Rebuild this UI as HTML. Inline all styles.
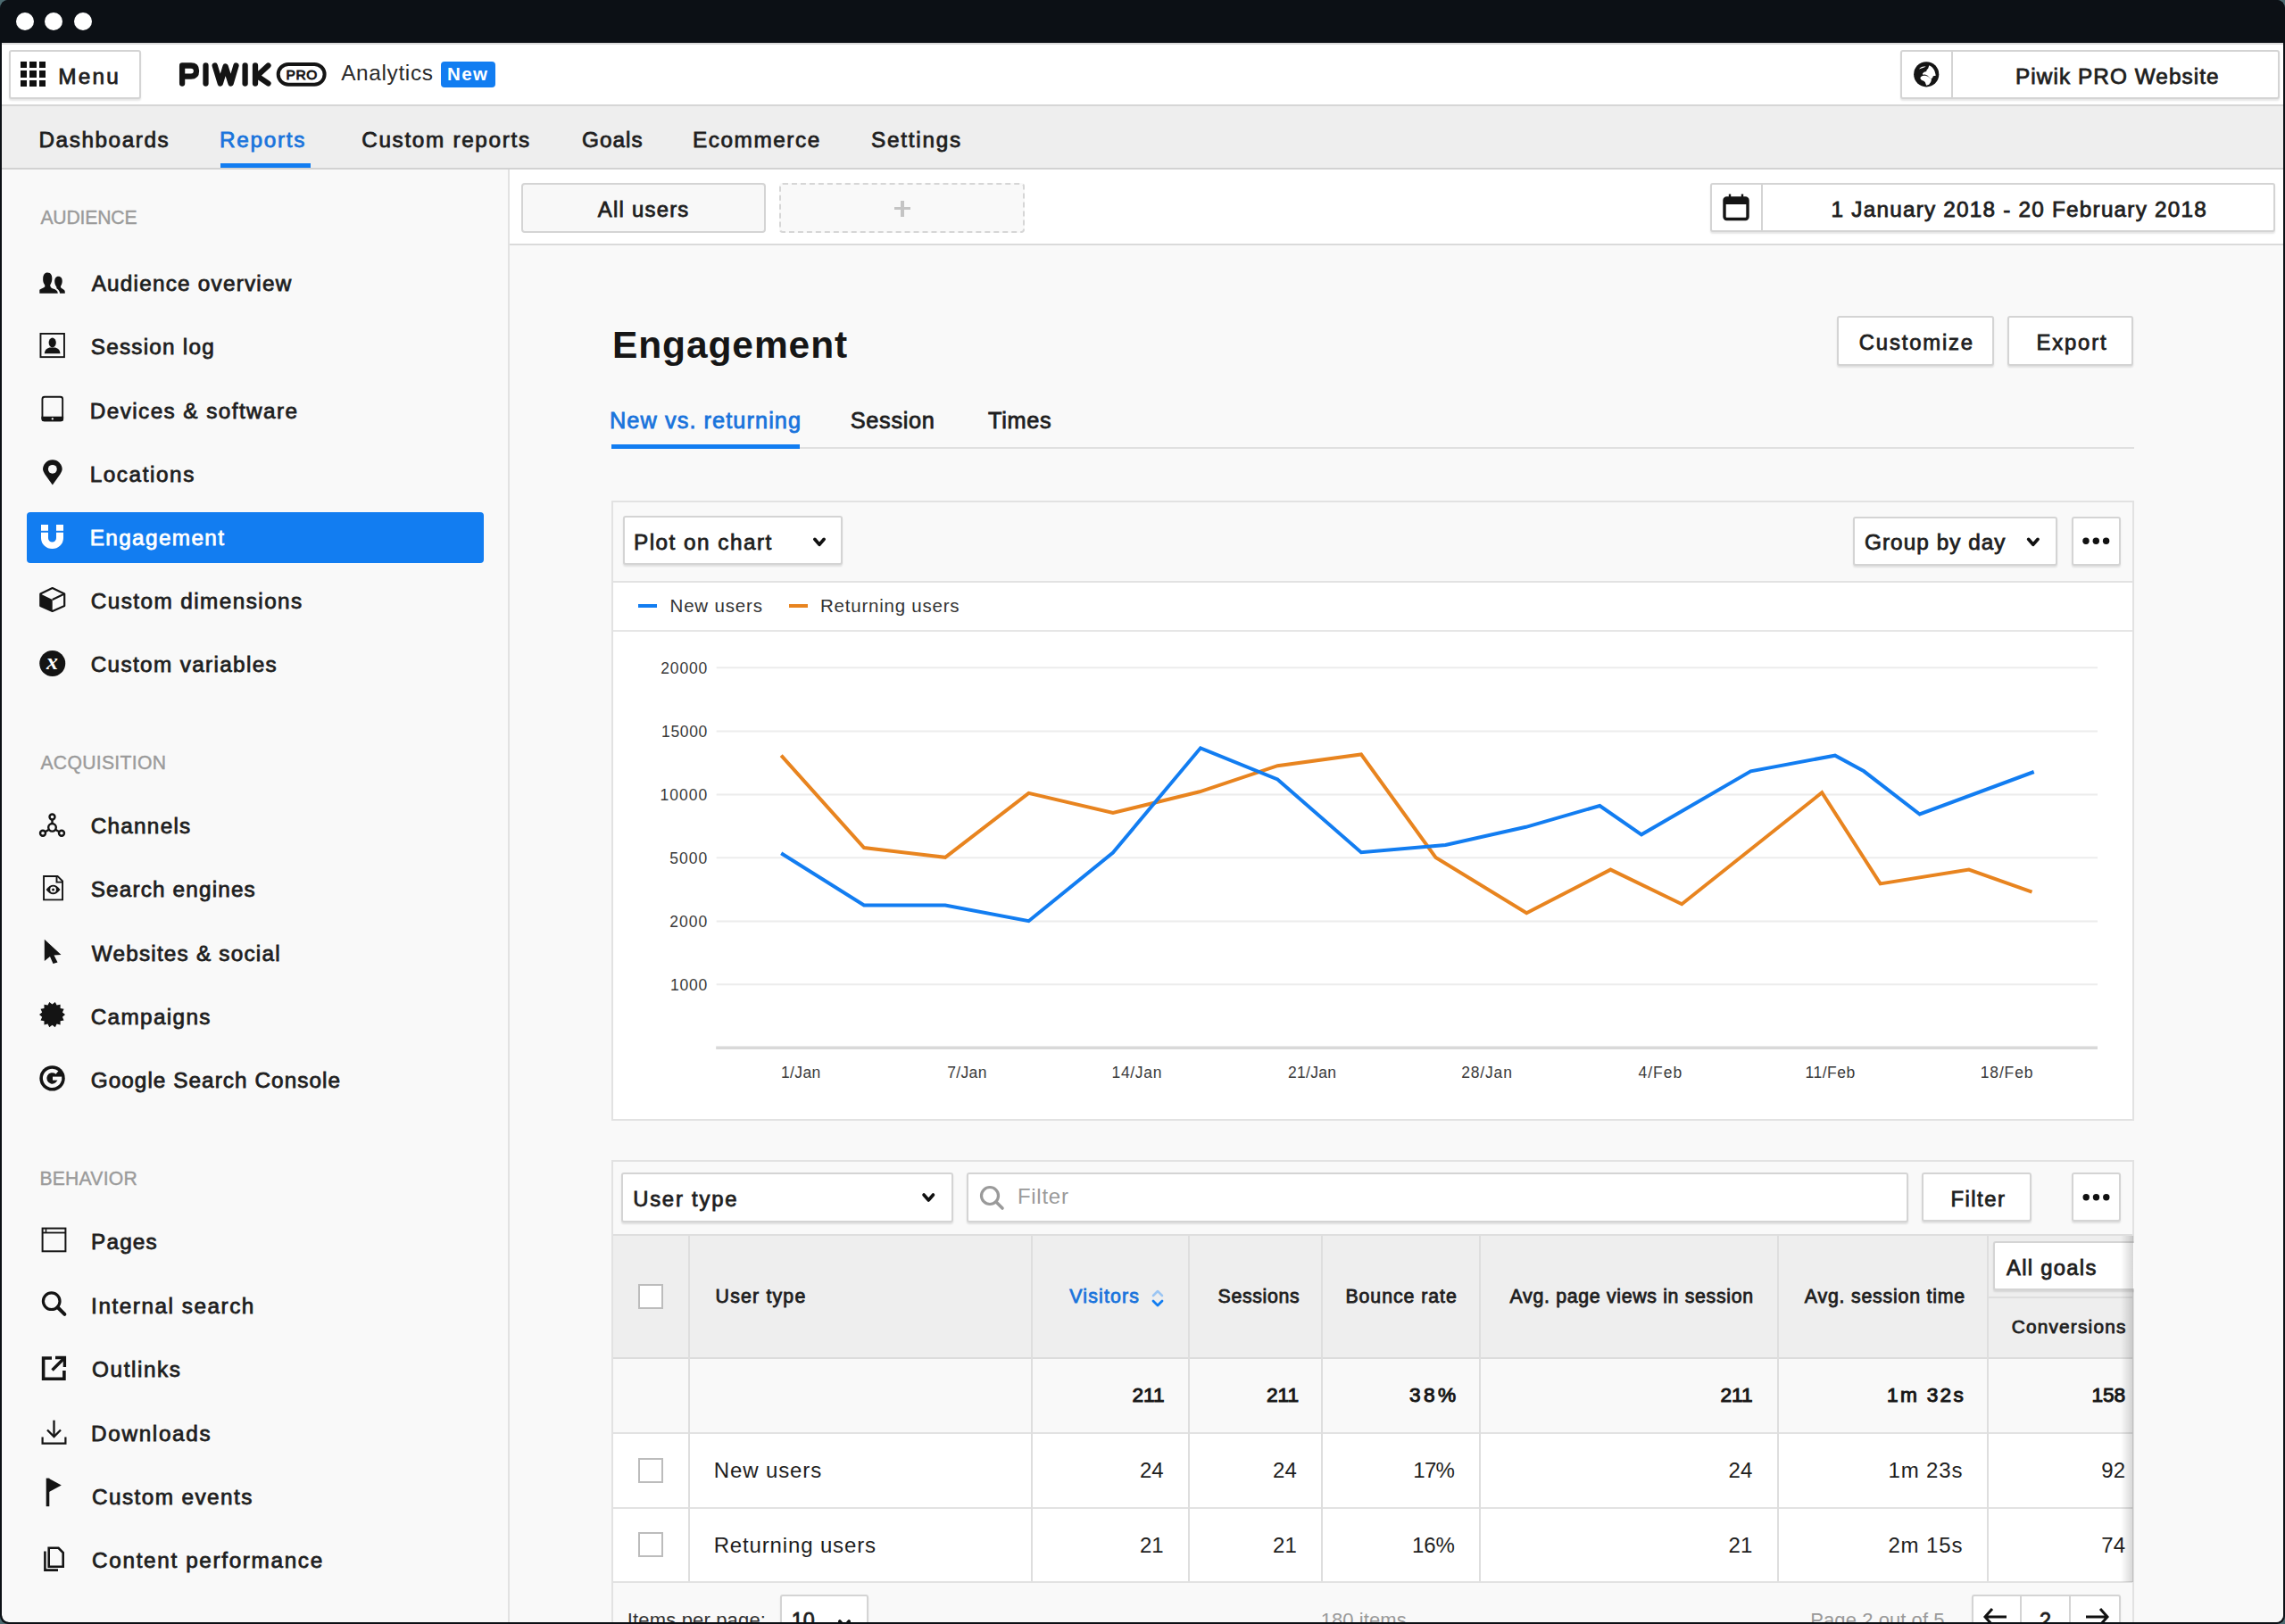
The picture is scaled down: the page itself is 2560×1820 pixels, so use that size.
<!DOCTYPE html><html><head><meta charset='utf-8'><style>
html,body{margin:0;padding:0;width:2560px;height:1820px;overflow:hidden;background:#4c6a70;}
.b{position:absolute;}
.t{position:absolute;white-space:nowrap;font-family:"Liberation Sans",sans-serif;}
svg{position:absolute;left:0;top:0;}
</style></head><body>
<div style='position:absolute;left:0;top:0;width:2560px;height:1820px;overflow:hidden;border-radius:9px 9px 9px 9px;background:#0c1015'>
<div style='position:absolute;left:2px;top:0;width:2556px;height:1818px;overflow:hidden;border-radius:0 0 8px 8px'><div style='position:absolute;left:-2px;top:0;width:2560px;height:1820px'>
<div class=b style="left:0.0px;top:0.0px;width:2560.0px;height:1820.0px;background:#0c1015;"></div>
<div class=b style="left:2.0px;top:48.0px;width:2556.0px;height:1770.0px;background:#f9f9f9;border-radius:0 0 8px 8px;"></div>
<div class=b style="left:2.0px;top:48.0px;width:2556.0px;height:70.0px;background:#ffffff;border-top:2px solid #dcdcdc;box-sizing:border-box;"></div>
<div class=b style="left:2.0px;top:117.0px;width:2556.0px;height:2.0px;background:#d6d6d6;"></div>
<div class=b style="left:2.0px;top:119.0px;width:2556.0px;height:69.0px;background:#eeeeee;"></div>
<div class=b style="left:2.0px;top:188.0px;width:2556.0px;height:2.0px;background:#d2d2d2;"></div>
<div class=b style="left:247.0px;top:183.0px;width:101.0px;height:5.0px;background:#127df1;"></div>
<div class=b style="left:568.5px;top:190.0px;width:2.0px;height:1628.0px;background:#e2e2e2;"></div>
<div class=b style="left:570.5px;top:190.0px;width:1987.5px;height:83.5px;background:#ffffff;"></div>
<div class=b style="left:570.5px;top:273.0px;width:1987.5px;height:2.0px;background:#dadada;"></div>
<div class=b style='left:17.6px;top:13.8px;width:20px;height:20px;border-radius:50%;background:#fff'></div>
<div class=b style='left:49.5px;top:13.8px;width:20px;height:20px;border-radius:50%;background:#fff'></div>
<div class=b style='left:83.0px;top:13.8px;width:20px;height:20px;border-radius:50%;background:#fff'></div>
<div class=b style="left:9.5px;top:55.7px;width:148.0px;height:55.3px;background:#fff;border:2px solid #d4d4d4;border-radius:3px;box-shadow:0 2px 2px rgba(0,0,0,0.10);box-sizing:border-box;"></div>
<div class=b style="left:23.0px;top:69.0px;width:7.4px;height:7.4px;background:#111;"></div>
<div class=b style="left:33.4px;top:69.0px;width:7.4px;height:7.4px;background:#111;"></div>
<div class=b style="left:43.8px;top:69.0px;width:7.4px;height:7.4px;background:#111;"></div>
<div class=b style="left:23.0px;top:79.4px;width:7.4px;height:7.4px;background:#111;"></div>
<div class=b style="left:33.4px;top:79.4px;width:7.4px;height:7.4px;background:#111;"></div>
<div class=b style="left:43.8px;top:79.4px;width:7.4px;height:7.4px;background:#111;"></div>
<div class=b style="left:23.0px;top:89.8px;width:7.4px;height:7.4px;background:#111;"></div>
<div class=b style="left:33.4px;top:89.8px;width:7.4px;height:7.4px;background:#111;"></div>
<div class=b style="left:43.8px;top:89.8px;width:7.4px;height:7.4px;background:#111;"></div>
<div class=b style="left:2129.0px;top:55.8px;width:425.0px;height:55.2px;background:#fff;border:2px solid #d4d4d4;border-radius:3px;box-shadow:0 2px 2px rgba(0,0,0,0.10);box-sizing:border-box;"></div>
<div class=b style="left:2186.4px;top:57.5px;width:2.0px;height:52.0px;background:#d4d4d4;"></div>
<div class=b style="left:583.6px;top:205.0px;width:274.4px;height:55.6px;background:#f8f8f8;border:2px solid #d4d4d4;border-radius:4px;box-sizing:border-box;"></div>
<div class=b style="left:873.0px;top:205.0px;width:274.7px;height:56.0px;background:#f9f9f9;border:2px dashed #d6d6d6;border-radius:4px;box-sizing:border-box;"></div>
<div class=b style="left:1009.3px;top:224.5px;width:3.4px;height:18.0px;background:#c4c4c4;"></div>
<div class=b style="left:1002.0px;top:231.8px;width:18.0px;height:3.4px;background:#c4c4c4;"></div>
<div class=b style="left:1915.7px;top:205.3px;width:633.0px;height:54.5px;background:#fff;border:2px solid #d4d4d4;border-radius:3px;box-shadow:0 2px 2px rgba(0,0,0,0.10);box-sizing:border-box;"></div>
<div class=b style="left:1973.3px;top:207.0px;width:2.0px;height:51.0px;background:#d4d4d4;"></div>
<div class=b style="left:2057.5px;top:354.4px;width:176.5px;height:55.3px;background:#fff;border:2px solid #d4d4d4;border-radius:3px;box-shadow:0 2px 2px rgba(0,0,0,0.10);box-sizing:border-box;"></div>
<div class=b style="left:2249.2px;top:354.4px;width:141.3px;height:55.3px;background:#fff;border:2px solid #d4d4d4;border-radius:3px;box-shadow:0 2px 2px rgba(0,0,0,0.10);box-sizing:border-box;"></div>
<div class=b style="left:685.0px;top:501.0px;width:1706.0px;height:2.0px;background:#e0e0e0;"></div>
<div class=b style="left:685.0px;top:497.5px;width:211.0px;height:5.5px;background:#127df1;"></div>
<div class=b style="left:685.0px;top:561.0px;width:1706.0px;height:695.0px;background:#ffffff;border:2px solid #e2e2e2;box-sizing:border-box;"></div>
<div class=b style="left:687.0px;top:563.0px;width:1702.0px;height:88.0px;background:#f9f9f9;"></div>
<div class=b style="left:687.0px;top:650.5px;width:1702.0px;height:2.0px;background:#e2e2e2;"></div>
<div class=b style="left:687.0px;top:705.5px;width:1702.0px;height:2.0px;background:#e6e6e6;"></div>
<div class=b style="left:697.6px;top:578.3px;width:246.9px;height:55.1px;background:#fff;border:2px solid #d4d4d4;border-radius:3px;box-shadow:0 2px 2px rgba(0,0,0,0.10);box-sizing:border-box;"></div>
<div class=b style="left:2075.5px;top:578.5px;width:229.2px;height:55.2px;background:#fff;border:2px solid #d4d4d4;border-radius:3px;box-shadow:0 2px 2px rgba(0,0,0,0.10);box-sizing:border-box;"></div>
<div class=b style="left:2320.6px;top:578.5px;width:55.4px;height:55.2px;background:#fff;border:2px solid #d4d4d4;border-radius:3px;box-shadow:0 2px 2px rgba(0,0,0,0.10);box-sizing:border-box;"></div>
<div class=b style="left:714.7px;top:677.2px;width:21.3px;height:3.4px;background:#127df1;"></div>
<div class=b style="left:883.6px;top:677.2px;width:21.0px;height:3.4px;background:#e8841f;"></div>
<div class=b style="left:685.0px;top:1300.0px;width:1706.0px;height:530.0px;background:#f9f9f9;border:2px solid #e2e2e2;box-sizing:border-box;"></div>
<div class=b style="left:695.8px;top:1314.0px;width:372.1px;height:56.0px;background:#fff;border:2px solid #d4d4d4;border-radius:3px;box-shadow:0 2px 2px rgba(0,0,0,0.10);box-sizing:border-box;"></div>
<div class=b style="left:1083.0px;top:1314.0px;width:1054.7px;height:56.0px;background:#fff;border:2px solid #d4d4d4;border-radius:3px;box-shadow:0 2px 2px rgba(0,0,0,0.10);box-sizing:border-box;"></div>
<div class=b style="left:2153.4px;top:1314.3px;width:123.0px;height:55.0px;background:#fff;border:2px solid #d4d4d4;border-radius:3px;box-shadow:0 2px 2px rgba(0,0,0,0.10);box-sizing:border-box;"></div>
<div class=b style="left:2320.8px;top:1314.3px;width:55.3px;height:55.0px;background:#fff;border:2px solid #d4d4d4;border-radius:3px;box-shadow:0 2px 2px rgba(0,0,0,0.10);box-sizing:border-box;"></div>
<div class=b style="left:687.0px;top:1382.5px;width:1702.0px;height:2.0px;background:#dedede;"></div>
<div class=b style="left:687.0px;top:1384.5px;width:1702.0px;height:137.5px;background:#eeeeee;"></div>
<div class=b style="left:687.0px;top:1521.0px;width:1702.0px;height:2.0px;background:#dcdcdc;"></div>
<div class=b style="left:687.0px;top:1523.0px;width:1702.0px;height:81.5px;background:#f9f9f9;"></div>
<div class=b style="left:687.0px;top:1604.5px;width:1702.0px;height:2.0px;background:#e2e2e2;"></div>
<div class=b style="left:687.0px;top:1606.5px;width:1702.0px;height:82.0px;background:#ffffff;"></div>
<div class=b style="left:687.0px;top:1688.5px;width:1702.0px;height:2.0px;background:#e2e2e2;"></div>
<div class=b style="left:687.0px;top:1690.5px;width:1702.0px;height:81.5px;background:#ffffff;"></div>
<div class=b style="left:687.0px;top:1772.0px;width:1702.0px;height:2.0px;background:#e2e2e2;"></div>
<div class=b style="left:771.0px;top:1384.5px;width:2.0px;height:387.5px;background:#dedede;"></div>
<div class=b style="left:1155.3px;top:1384.5px;width:2.0px;height:387.5px;background:#dedede;"></div>
<div class=b style="left:1331.2px;top:1384.5px;width:2.0px;height:387.5px;background:#dedede;"></div>
<div class=b style="left:1480.4px;top:1384.5px;width:2.0px;height:387.5px;background:#dedede;"></div>
<div class=b style="left:1656.8px;top:1384.5px;width:2.0px;height:387.5px;background:#dedede;"></div>
<div class=b style="left:1991.0px;top:1384.5px;width:2.0px;height:387.5px;background:#dedede;"></div>
<div class=b style="left:2225.6px;top:1384.5px;width:2.0px;height:387.5px;background:#dedede;"></div>
<div class=b style="left:2233.3px;top:1390.5px;width:166.7px;height:55.5px;background:#fff;border:2px solid #d4d4d4;border-radius:3px;box-shadow:0 2px 2px rgba(0,0,0,0.10);box-sizing:border-box;"></div>
<div class=b style="left:2226.6px;top:1453.0px;width:162.4px;height:2.0px;background:#dedede;"></div>
<div class=b style="left:2376.0px;top:1384.5px;width:14.0px;height:388.5px;background:linear-gradient(to right, rgba(0,0,0,0) 0%, rgba(0,0,0,0.16) 100%);"></div>
<div class=b style="left:2391.0px;top:1300.0px;width:167.0px;height:518.0px;background:#f9f9f9;"></div>
<div class=b style="left:715.0px;top:1439.4px;width:28.0px;height:28.0px;background:#fff;border:2px solid #bcbcbc;box-sizing:border-box;"></div>
<div class=b style="left:715.0px;top:1633.6px;width:28.0px;height:28.0px;background:#fff;border:2px solid #bcbcbc;box-sizing:border-box;"></div>
<div class=b style="left:715.0px;top:1717.4px;width:28.0px;height:28.0px;background:#fff;border:2px solid #bcbcbc;box-sizing:border-box;"></div>
<div class=b style="left:873.9px;top:1787.2px;width:99.3px;height:52.8px;background:#fff;border:2px solid #d4d4d4;border-radius:3px;box-shadow:0 2px 2px rgba(0,0,0,0.10);box-sizing:border-box;"></div>
<div class=b style="left:2208.5px;top:1787.3px;width:167.5px;height:52.7px;background:#fff;border:2px solid #d4d4d4;border-radius:3px;box-shadow:0 2px 2px rgba(0,0,0,0.10);box-sizing:border-box;"></div>
<div class=b style="left:2263.0px;top:1789.0px;width:2.0px;height:29.0px;background:#d4d4d4;"></div>
<div class=b style="left:2318.2px;top:1789.0px;width:2.0px;height:29.0px;background:#d4d4d4;"></div>
<div class=b style="left:494.3px;top:69.3px;width:60.4px;height:28.3px;background:#127df1;border-radius:4px;"></div>
<div class=b style="left:30.3px;top:574.0px;width:511.7px;height:56.7px;background:#127df1;border-radius:4px;"></div>
<svg width='2560' height='1820' viewBox='0 0 2560 1820'><line x1='802.7' y1='748.3' x2='2350' y2='748.3' stroke='#ececec' stroke-width='2'/>
<line x1='802.7' y1='819.4' x2='2350' y2='819.4' stroke='#ececec' stroke-width='2'/>
<line x1='802.7' y1='890.5' x2='2350' y2='890.5' stroke='#ececec' stroke-width='2'/>
<line x1='802.7' y1='961.3' x2='2350' y2='961.3' stroke='#ececec' stroke-width='2'/>
<line x1='802.7' y1='1032.4' x2='2350' y2='1032.4' stroke='#ececec' stroke-width='2'/>
<line x1='802.7' y1='1103.3' x2='2350' y2='1103.3' stroke='#ececec' stroke-width='2'/>
<line x1='802.2' y1='1174.2' x2='2350' y2='1174.2' stroke='#d9d9d9' stroke-width='3.5'/>
<polyline points='875.2,846.6 968.0,950.1 1059.0,960.8 1152.5,888.8 1246.9,911.0 1344.0,887.3 1431.3,858.2 1525.0,845.5 1608.5,961.0 1710.3,1023.2 1804.4,974.6 1884.2,1013.2 2041.2,888.2 2106.6,990.4 2205.9,974.6 2276.5,999.6' fill='none' stroke='#e8841f' stroke-width='4' stroke-linejoin='miter'/>
<polyline points='875.2,956.3 968.0,1014.5 1059.0,1014.5 1152.5,1032.2 1246.9,955.6 1345.0,838.3 1431.3,873.5 1525.0,955.3 1619.5,947.0 1709.6,926.8 1792.3,903.0 1839.0,935.3 1961.4,864.3 2055.9,846.7 2088.2,864.3 2150.7,912.5 2278.7,865.0' fill='none' stroke='#127df1' stroke-width='4' stroke-linejoin='miter'/>
<polyline points='912.8,604.3 918.0,610.3 923.2,604.3' fill='none' stroke='#111' stroke-width='3.6' stroke-linecap='round' stroke-linejoin='round'/>
<polyline points='2272.6,604.3 2277.8,610.3 2283.1,604.3' fill='none' stroke='#111' stroke-width='3.6' stroke-linecap='round' stroke-linejoin='round'/>
<polyline points='1035.0,1339.0 1040.3,1345.0 1045.5,1339.0' fill='none' stroke='#111' stroke-width='3.6' stroke-linecap='round' stroke-linejoin='round'/>
<polyline points='940.8,1817.0 946.0,1823.0 951.2,1817.0' fill='none' stroke='#111' stroke-width='3.6' stroke-linecap='round' stroke-linejoin='round'/>
<circle cx='2337.0' cy='606.2' r='3.7' fill='#111'/>
<circle cx='2348.3' cy='606.2' r='3.7' fill='#111'/>
<circle cx='2359.6' cy='606.2' r='3.7' fill='#111'/>
<circle cx='2337.2' cy='1341.8' r='3.7' fill='#111'/>
<circle cx='2348.5' cy='1341.8' r='3.7' fill='#111'/>
<circle cx='2359.8' cy='1341.8' r='3.7' fill='#111'/>
<polyline points='1292,1452 1297,1447 1302,1452' fill='none' stroke='#9cc6f3' stroke-width='2.5' stroke-linecap='round' stroke-linejoin='round'/>
<polyline points='1292,1458 1297,1463 1302,1458' fill='none' stroke='#127df1' stroke-width='2.8' stroke-linecap='round' stroke-linejoin='round'/>
<circle cx='1109' cy='1340' r='9.5' fill='none' stroke='#9a9a9a' stroke-width='3.2'/><line x1='1116' y1='1347' x2='1123' y2='1354' stroke='#9a9a9a' stroke-width='3.6' stroke-linecap='round'/>
<path d='M2224,1812 L2248,1812 M2232,1803 L2224,1812 L2232,1821' fill='none' stroke='#111' stroke-width='3'/>
<path d='M2337,1812 L2361,1812 M2353,1803 L2361,1812 L2353,1821' fill='none' stroke='#111' stroke-width='3'/>
<path d='M204.1,93.5 L204.1,73.5 L214,73.5 Q220,73.5 220,79.5 Q220,85.6 214,85.6 L204.1,85.6' fill='none' stroke='#141414' stroke-width='6.3' stroke-linecap='round' stroke-linejoin='round'/>
<path d='M230.5,73.5 L230.5,93.5' fill='none' stroke='#141414' stroke-width='6.3' stroke-linecap='round' stroke-linejoin='round'/>
<path d='M240.7,73.5 L246.8,93.5 L252.6,74.5 L258.6,93.5 L264.5,73.5' fill='none' stroke='#141414' stroke-width='6.3' stroke-linecap='round' stroke-linejoin='round'/>
<path d='M274.6,73.5 L274.6,93.5' fill='none' stroke='#141414' stroke-width='6.3' stroke-linecap='round' stroke-linejoin='round'/>
<path d='M286,73.5 L286,93.5 M300.5,73.5 L288,85 L300.5,93.5' fill='none' stroke='#141414' stroke-width='6.3' stroke-linecap='round' stroke-linejoin='round'/>
<rect x='311.7' y='71.9' width='51.9' height='22.8' rx='11.4' fill='none' stroke='#141414' stroke-width='4'/>
<text x='338.2' y='89.3' text-anchor='middle' font-family='Liberation Sans' font-weight='400' font-size='15.5' fill='#141414' stroke='#141414' stroke-width='0.9' letter-spacing='0.6'>PRO</text>
<circle cx='2158.2' cy='83.3' r='14.1' fill='#141414'/><g transform='translate(2138,63) scale(0.02463)' fill='#fff'><path d='M950,420 C1100,480 1200,600 1250,880 L1130,900 L1100,980 L1040,1030 L980,1000 L940,950 L880,880 L760,830 L660,840 L650,780 L720,720 L820,690 L840,620 L900,560 L930,470 Z'/><path d='M540,1000 C560,900 650,880 780,880 L900,920 L960,980 L1060,1050 L1020,1180 L940,1290 L820,1330 L760,1180 L700,1130 L600,1090 Z'/><path d='M490,590 C520,500 650,440 800,470 C750,520 600,540 490,590 Z'/></g>
<rect x='1932' y='222' width='26' height='23.5' rx='2.5' fill='none' stroke='#141414' stroke-width='3.4'/><rect x='1932' y='222' width='26' height='7' fill='#141414'/><line x1='1938' y1='217.5' x2='1938' y2='223' stroke='#141414' stroke-width='2.4'/><line x1='1952' y1='217.5' x2='1952' y2='223' stroke='#141414' stroke-width='2.4'/>
<g transform='translate(40,300) scale(0.021552)' fill='#141414'><path d='M610,260 C800,260 860,420 850,600 C840,760 780,850 750,900 C760,1000 800,1050 900,1090 C1050,1140 1150,1200 1150,1330 L200,1330 L200,1150 C300,1080 420,1050 470,1000 C490,950 480,920 460,880 C400,800 370,700 380,560 C390,380 460,260 610,260 Z'/><path d='M1180,450 C1320,450 1380,560 1380,700 C1380,820 1340,900 1300,960 C1290,1000 1300,1050 1380,1090 C1460,1130 1520,1170 1520,1250 L1520,1330 L1260,1330 C1240,1220 1180,1130 1090,1080 L1080,1000 C1040,940 990,860 985,740 C980,560 1040,450 1180,450 Z'/></g>
<rect x='45.45' y='373.95' width='26.5' height='26.2' fill='none' stroke='#141414' stroke-width='1.9'/><g fill='#141414'><ellipse cx='58.7' cy='384' rx='4.1' ry='5.4'/><path d='M49.8,396.2 Q50.2,391 55.5,389.6 L62,389.6 Q67.2,391 67.5,396.2 Z'/></g>
<rect x='47.45' y='444.75' width='22.7' height='26.6' rx='2.5' fill='none' stroke='#141414' stroke-width='1.9'/><path d='M46.5,466.8 L71.1,466.8 L71.1,469.8 Q71.1,472.3 68.6,472.3 L49,472.3 Q46.5,472.3 46.5,469.8 Z' fill='#141414'/><circle cx='58.8' cy='469.4' r='1.15' fill='#f9f9f9'/>
<path d='M58.85,543.6 L50.3,531.5 Q48,528 48,526.05 A10.85,10.85 0 0 1 69.7,526.05 Q69.7,528 67.4,531.5 Z' fill='#141414'/><circle cx='58.85' cy='525.8' r='4.9' fill='#f9f9f9'/>
<g fill='#fff'><path d='M46,596.8 L54,596.8 L54,603 A4.5,4.5 0 0 0 63,603 L63,596.8 L71,596.8 L71,603 A12.5,12 0 0 1 46,603 Z'/><rect x='46' y='588' width='8' height='6.8'/><rect x='63' y='588' width='8' height='6.8'/></g>
<path d='M58.7,659 L72.2,665.5 L72.2,679 L58.7,685 L45.3,679 L45.3,665.5 Z' fill='none' stroke='#141414' stroke-width='2.2' stroke-linejoin='round'/><path d='M45.3,665.5 L58.7,672 L58.7,685 L45.3,679 Z' fill='#141414'/><path d='M58.7,672 L72.2,665.5' stroke='#141414' stroke-width='2'/>
<circle cx='58.75' cy='743.4' r='14.5' fill='#141414'/><text x='58.5' y='749.5' text-anchor='middle' font-family='Liberation Serif' font-style='italic' font-weight='700' font-size='26' fill='#fff'>x</text>
<g fill='none' stroke='#141414' stroke-width='2.4'><circle cx='58.5' cy='915.5' r='3'/><circle cx='58.5' cy='927.3' r='4.3'/><circle cx='48' cy='933.8' r='3'/><circle cx='69' cy='933.8' r='3'/><line x1='58.5' y1='918.5' x2='58.5' y2='923'/><line x1='54.8' y1='929.8' x2='50.6' y2='932.3'/><line x1='62.2' y1='929.8' x2='66.4' y2='932.3'/></g>
<path d='M49.05,981.95 L64.5,981.95 L70.05,987.5 L70.05,1008.35 L49.05,1008.35 Z' fill='none' stroke='#141414' stroke-width='1.9' stroke-linejoin='miter'/><path d='M63.5,982 L63.5,988.6 L70,988.6' fill='none' stroke='#141414' stroke-width='1.9'/><path d='M51.6,996.96 Q59.56,986.5 67.5,996.96 Q59.56,1007.4 51.6,996.96 Z' fill='#141414'/><circle cx='59.56' cy='996.96' r='3.4' fill='#f9f9f9'/><circle cx='59.56' cy='996.96' r='1.5' fill='#141414'/>
<path d='M49.8,1052.8 L68.5,1070 L60.5,1070.5 L64.5,1078.5 L59.5,1080 L56,1072 L49.8,1077 Z' fill='#141414'/>
<polygon points='73.0,1137.1 69.9,1139.7 71.6,1143.4 67.6,1144.3 67.6,1148.4 63.6,1147.6 61.8,1151.2 58.5,1148.7 55.3,1151.2 53.5,1147.6 49.5,1148.4 49.5,1144.3 45.5,1143.4 47.2,1139.7 44.0,1137.1 47.2,1134.5 45.5,1130.8 49.5,1129.9 49.5,1125.8 53.5,1126.6 55.3,1123.0 58.5,1125.5 61.8,1123.0 63.6,1126.6 67.6,1125.8 67.6,1129.9 71.6,1130.8 69.9,1134.5' fill='#141414'/>
<circle cx='58.55' cy='1208.4' r='14.2' fill='#141414'/><path d='M66.95,1208.6 A8.4,8.4 0 1 1 63.95,1201.97' fill='none' stroke='#f9f9f9' stroke-width='4.4'/><rect x='59' y='1206.6' width='10.2' height='4.0' fill='#f9f9f9'/>
<rect x='47.6' y='1376.6' width='25.8' height='25.7' fill='none' stroke='#141414' stroke-width='2'/><line x1='47.6' y1='1381.5' x2='73.4' y2='1381.5' stroke='#141414' stroke-width='1.8'/><line x1='51.5' y1='1376.6' x2='51.5' y2='1381.5' stroke='#141414' stroke-width='1.5'/>
<circle cx='57.7' cy='1458.2' r='9.3' fill='none' stroke='#141414' stroke-width='3.2'/><line x1='64.5' y1='1465' x2='72.4' y2='1472.8' stroke='#141414' stroke-width='4' stroke-linecap='round'/>
<path d='M58,1522 L48.6,1522 L48.6,1545.3 L71.9,1545.3 L71.9,1536' fill='none' stroke='#141414' stroke-width='3.6'/><path d='M62,1521.5 L72.4,1521.5 L72.4,1532' fill='none' stroke='#141414' stroke-width='3.4'/><line x1='71.5' y1='1522.5' x2='58.5' y2='1535.5' stroke='#141414' stroke-width='3.4'/>
<line x1='60.5' y1='1591.7' x2='60.5' y2='1609' stroke='#141414' stroke-width='2.3'/><polyline points='53,1602.5 60.5,1610 68,1602.5' fill='none' stroke='#141414' stroke-width='2.3'/><polyline points='47.6,1610.5 47.6,1617.6 73.4,1617.6 73.4,1610.5' fill='none' stroke='#141414' stroke-width='2.2'/>
<rect x='51.7' y='1656.6' width='3.6' height='31.6' fill='#141414'/><path d='M55,1657 L68.8,1664.6 L55,1672 Z' fill='#141414'/>
<path d='M50.4,1738.5 L50.4,1759.6 L65,1759.6' fill='none' stroke='#141414' stroke-width='2.6'/><path d='M54.7,1734.8 L65.5,1734.8 L70.7,1740 L70.7,1755.8 L54.7,1755.8 Z' fill='none' stroke='#141414' stroke-width='2.6'/></svg>
<div class=t style="left:65.2px;top:73.9px;font-size:24.32px;line-height:24.32px;font-weight:400;color:#1e1e1e;letter-spacing:2.23px;-webkit-text-stroke:0.8px #1e1e1e;">Menu</div>
<div class=t style="left:382.2px;top:70.0px;font-size:24.4px;line-height:24.4px;font-weight:400;color:#2a2a2a;letter-spacing:0.64px;">Analytics</div>
<div class=t style="left:501.0px;top:73.2px;font-size:20.5px;line-height:20.5px;font-weight:700;color:#ffffff;letter-spacing:1.40px;">New</div>
<div class=t style="left:2258.0px;top:74.0px;font-size:24.32px;line-height:24.32px;font-weight:400;color:#1e1e1e;letter-spacing:1.08px;-webkit-text-stroke:0.8px #1e1e1e;">Piwik PRO Website</div>
<div class=t style="left:43.5px;top:144.7px;font-size:24.32px;line-height:24.32px;font-weight:400;color:#1e1e1e;letter-spacing:1.56px;-webkit-text-stroke:0.8px #1e1e1e;">Dashboards</div>
<div class=t style="left:246.0px;top:144.7px;font-size:24.32px;line-height:24.32px;font-weight:400;color:#1a74dc;letter-spacing:1.72px;-webkit-text-stroke:0.8px #1a74dc;">Reports</div>
<div class=t style="left:405.2px;top:144.7px;font-size:24.32px;line-height:24.32px;font-weight:400;color:#1e1e1e;letter-spacing:1.67px;-webkit-text-stroke:0.8px #1e1e1e;">Custom reports</div>
<div class=t style="left:652.0px;top:144.7px;font-size:24.32px;line-height:24.32px;font-weight:400;color:#1e1e1e;letter-spacing:1.01px;-webkit-text-stroke:0.8px #1e1e1e;">Goals</div>
<div class=t style="left:776.0px;top:144.7px;font-size:24.32px;line-height:24.32px;font-weight:400;color:#1e1e1e;letter-spacing:1.57px;-webkit-text-stroke:0.8px #1e1e1e;">Ecommerce</div>
<div class=t style="left:976.0px;top:144.7px;font-size:24.32px;line-height:24.32px;font-weight:400;color:#1e1e1e;letter-spacing:1.76px;-webkit-text-stroke:0.8px #1e1e1e;">Settings</div>
<div class=t style="left:669.8px;top:223.3px;font-size:23.82px;line-height:23.82px;font-weight:400;color:#1e1e1e;letter-spacing:1.27px;-webkit-text-stroke:0.8px #1e1e1e;">All users</div>
<div class=t style="left:2051.6px;top:223.4px;font-size:24.32px;line-height:24.32px;font-weight:400;color:#1e1e1e;letter-spacing:1.22px;-webkit-text-stroke:0.8px #1e1e1e;">1 January 2018 - 20 February 2018</div>
<div class=t style="left:686.0px;top:365.7px;font-size:42.5px;line-height:42.5px;font-weight:700;color:#161616;letter-spacing:0.90px;">Engagement</div>
<div class=t style="left:683.0px;top:458.8px;font-size:25.32px;line-height:25.32px;font-weight:400;color:#1a74dc;letter-spacing:1.07px;-webkit-text-stroke:0.8px #1a74dc;">New vs. returning</div>
<div class=t style="left:952.8px;top:458.8px;font-size:25.32px;line-height:25.32px;font-weight:400;color:#1e1e1e;letter-spacing:0.67px;-webkit-text-stroke:0.8px #1e1e1e;">Session</div>
<div class=t style="left:1107.0px;top:458.8px;font-size:25.32px;line-height:25.32px;font-weight:400;color:#1e1e1e;letter-spacing:0.67px;-webkit-text-stroke:0.8px #1e1e1e;">Times</div>
<div class=t style="left:2082.8px;top:372.3px;font-size:23.82px;line-height:23.82px;font-weight:400;color:#1e1e1e;letter-spacing:1.85px;-webkit-text-stroke:0.8px #1e1e1e;">Customize</div>
<div class=t style="left:2281.5px;top:372.3px;font-size:23.82px;line-height:23.82px;font-weight:400;color:#1e1e1e;letter-spacing:1.86px;-webkit-text-stroke:0.8px #1e1e1e;">Export</div>
<div class=t style="left:710.0px;top:596.4px;font-size:24.32px;line-height:24.32px;font-weight:400;color:#1e1e1e;letter-spacing:1.49px;-webkit-text-stroke:0.8px #1e1e1e;">Plot on chart</div>
<div class=t style="left:2089.0px;top:596.4px;font-size:24.32px;line-height:24.32px;font-weight:400;color:#1e1e1e;letter-spacing:1.05px;-webkit-text-stroke:0.8px #1e1e1e;">Group by day</div>
<div class=t style="left:750.5px;top:668.6px;font-size:20.5px;line-height:20.5px;font-weight:400;color:#333333;letter-spacing:0.83px;">New users</div>
<div class=t style="left:919.0px;top:668.6px;font-size:20.5px;line-height:20.5px;font-weight:400;color:#333333;letter-spacing:0.77px;">Returning users</div>
<div class=t style="left:740.2px;top:740.8px;font-size:17.5px;line-height:17.5px;font-weight:400;color:#3a3a3a;letter-spacing:0.87px;">20000</div>
<div class=t style="left:741.1px;top:811.9px;font-size:17.5px;line-height:17.5px;font-weight:400;color:#3a3a3a;letter-spacing:0.64px;">15000</div>
<div class=t style="left:739.6px;top:883.0px;font-size:17.5px;line-height:17.5px;font-weight:400;color:#3a3a3a;letter-spacing:1.02px;">10000</div>
<div class=t style="left:750.2px;top:953.8px;font-size:17.5px;line-height:17.5px;font-weight:400;color:#3a3a3a;letter-spacing:1.07px;">5000</div>
<div class=t style="left:750.2px;top:1024.9px;font-size:17.5px;line-height:17.5px;font-weight:400;color:#3a3a3a;letter-spacing:1.07px;">2000</div>
<div class=t style="left:751.1px;top:1095.8px;font-size:17.5px;line-height:17.5px;font-weight:400;color:#3a3a3a;letter-spacing:0.77px;">1000</div>
<div class=t style="left:875.0px;top:1193.8px;font-size:17.5px;line-height:17.5px;font-weight:400;color:#3a3a3a;letter-spacing:0.36px;">1/Jan</div>
<div class=t style="left:1061.2px;top:1193.8px;font-size:17.5px;line-height:17.5px;font-weight:400;color:#3a3a3a;letter-spacing:0.36px;">7/Jan</div>
<div class=t style="left:1245.5px;top:1193.8px;font-size:17.5px;line-height:17.5px;font-weight:400;color:#3a3a3a;letter-spacing:0.68px;">14/Jan</div>
<div class=t style="left:1442.9px;top:1193.8px;font-size:17.5px;line-height:17.5px;font-weight:400;color:#3a3a3a;letter-spacing:0.32px;">21/Jan</div>
<div class=t style="left:1637.2px;top:1193.8px;font-size:17.5px;line-height:17.5px;font-weight:400;color:#3a3a3a;letter-spacing:0.84px;">28/Jan</div>
<div class=t style="left:1835.4px;top:1193.8px;font-size:17.5px;line-height:17.5px;font-weight:400;color:#3a3a3a;letter-spacing:1.05px;">4/Feb</div>
<div class=t style="left:2022.5px;top:1193.8px;font-size:17.5px;line-height:17.5px;font-weight:400;color:#3a3a3a;letter-spacing:0.49px;">11/Feb</div>
<div class=t style="left:2218.8px;top:1193.8px;font-size:17.5px;line-height:17.5px;font-weight:400;color:#3a3a3a;letter-spacing:0.83px;">18/Feb</div>
<div class=t style="left:709.2px;top:1332.0px;font-size:23.82px;line-height:23.82px;font-weight:400;color:#1e1e1e;letter-spacing:1.79px;-webkit-text-stroke:0.8px #1e1e1e;">User type</div>
<div class=t style="left:1139.9px;top:1329.3px;font-size:24px;line-height:24px;font-weight:400;color:#9a9a9a;letter-spacing:0.73px;">Filter</div>
<div class=t style="left:2185.4px;top:1332.3px;font-size:23.82px;line-height:23.82px;font-weight:400;color:#1e1e1e;letter-spacing:1.50px;-webkit-text-stroke:0.8px #1e1e1e;">Filter</div>
<div class=t style="left:801.6px;top:1443.2px;font-size:21.32px;line-height:21.32px;font-weight:400;color:#1e1e1e;letter-spacing:1.18px;-webkit-text-stroke:0.8px #1e1e1e;">User type</div>
<div class=t style="left:1198.3px;top:1443.2px;font-size:21.32px;line-height:21.32px;font-weight:400;color:#1a74dc;letter-spacing:1.17px;-webkit-text-stroke:0.8px #1a74dc;">Visitors</div>
<div class=t style="left:1364.5px;top:1443.2px;font-size:21.32px;line-height:21.32px;font-weight:400;color:#1e1e1e;letter-spacing:0.68px;-webkit-text-stroke:0.8px #1e1e1e;">Sessions</div>
<div class=t style="left:1507.4px;top:1443.2px;font-size:21.32px;line-height:21.32px;font-weight:400;color:#1e1e1e;letter-spacing:0.95px;-webkit-text-stroke:0.8px #1e1e1e;">Bounce rate</div>
<div class=t style="left:1691.6px;top:1443.2px;font-size:21.32px;line-height:21.32px;font-weight:400;color:#1e1e1e;letter-spacing:0.68px;-webkit-text-stroke:0.8px #1e1e1e;">Avg. page views in session</div>
<div class=t style="left:2021.8px;top:1443.2px;font-size:21.32px;line-height:21.32px;font-weight:400;color:#1e1e1e;letter-spacing:0.80px;-webkit-text-stroke:0.8px #1e1e1e;">Avg. session time</div>
<div class=t style="left:2248.0px;top:1409.0px;font-size:23.82px;line-height:23.82px;font-weight:400;color:#1e1e1e;letter-spacing:1.29px;-webkit-text-stroke:0.8px #1e1e1e;">All goals</div>
<div class=t style="left:2253.7px;top:1477.1px;font-size:20.82px;line-height:20.82px;font-weight:400;color:#1e1e1e;letter-spacing:1.20px;-webkit-text-stroke:0.8px #1e1e1e;">Conversions</div>
<div class=t style="left:1268.5px;top:1551.5px;font-size:22.65px;line-height:22.65px;font-weight:400;color:#161616;letter-spacing:0.00px;-webkit-text-stroke:1.0px #161616;">211</div>
<div class=t style="left:1419.0px;top:1551.5px;font-size:22.65px;line-height:22.65px;font-weight:400;color:#161616;letter-spacing:0.00px;-webkit-text-stroke:1.0px #161616;">211</div>
<div class=t style="left:1578.9px;top:1551.5px;font-size:22.65px;line-height:22.65px;font-weight:400;color:#161616;letter-spacing:3.46px;-webkit-text-stroke:1.0px #161616;">38%</div>
<div class=t style="left:1927.5px;top:1551.5px;font-size:22.65px;line-height:22.65px;font-weight:400;color:#161616;letter-spacing:0.00px;-webkit-text-stroke:1.0px #161616;">211</div>
<div class=t style="left:2114.0px;top:1551.5px;font-size:22.65px;line-height:22.65px;font-weight:400;color:#161616;letter-spacing:2.31px;-webkit-text-stroke:1.0px #161616;">1m 32s</div>
<div class=t style="left:2343.4px;top:1551.5px;font-size:22.65px;line-height:22.65px;font-weight:400;color:#161616;letter-spacing:0.00px;-webkit-text-stroke:1.0px #161616;">158</div>
<div class=t style="left:799.7px;top:1635.9px;font-size:24px;line-height:24px;font-weight:400;color:#1e1e1e;letter-spacing:0.90px;">New users</div>
<div class=t style="left:1277.0px;top:1635.9px;font-size:24px;line-height:24px;font-weight:400;color:#1e1e1e;letter-spacing:0.00px;">24</div>
<div class=t style="left:1426.1px;top:1635.9px;font-size:24px;line-height:24px;font-weight:400;color:#1e1e1e;letter-spacing:0.00px;">24</div>
<div class=t style="left:1583.3px;top:1635.9px;font-size:24px;line-height:24px;font-weight:400;color:#1e1e1e;letter-spacing:-0.75px;">17%</div>
<div class=t style="left:1936.6px;top:1635.9px;font-size:24px;line-height:24px;font-weight:400;color:#1e1e1e;letter-spacing:0.00px;">24</div>
<div class=t style="left:2115.5px;top:1635.9px;font-size:24px;line-height:24px;font-weight:400;color:#1e1e1e;letter-spacing:0.84px;">1m 23s</div>
<div class=t style="left:2354.3px;top:1635.9px;font-size:24px;line-height:24px;font-weight:400;color:#1e1e1e;letter-spacing:0.00px;">92</div>
<div class=t style="left:799.7px;top:1720.2px;font-size:24px;line-height:24px;font-weight:400;color:#1e1e1e;letter-spacing:0.85px;">Returning users</div>
<div class=t style="left:1277.0px;top:1720.2px;font-size:24px;line-height:24px;font-weight:400;color:#1e1e1e;letter-spacing:0.00px;">21</div>
<div class=t style="left:1426.1px;top:1720.2px;font-size:24px;line-height:24px;font-weight:400;color:#1e1e1e;letter-spacing:0.00px;">21</div>
<div class=t style="left:1582.0px;top:1720.2px;font-size:24px;line-height:24px;font-weight:400;color:#1e1e1e;letter-spacing:-0.10px;">16%</div>
<div class=t style="left:1936.6px;top:1720.2px;font-size:24px;line-height:24px;font-weight:400;color:#1e1e1e;letter-spacing:0.00px;">21</div>
<div class=t style="left:2115.4px;top:1720.2px;font-size:24px;line-height:24px;font-weight:400;color:#1e1e1e;letter-spacing:0.86px;">2m 15s</div>
<div class=t style="left:2354.3px;top:1720.2px;font-size:24px;line-height:24px;font-weight:400;color:#1e1e1e;letter-spacing:0.00px;">74</div>
<div class=t style="left:702.8px;top:1804.9px;font-size:22px;line-height:22px;font-weight:400;color:#333333;letter-spacing:0.16px;">Items per page:</div>
<div class=t style="left:886.7px;top:1805.3px;font-size:23.32px;line-height:23.32px;font-weight:400;color:#1e1e1e;letter-spacing:0.00px;-webkit-text-stroke:0.8px #1e1e1e;">10</div>
<div class=t style="left:1479.7px;top:1804.9px;font-size:22px;line-height:22px;font-weight:400;color:#9a9a9a;letter-spacing:0.08px;">180 items</div>
<div class=t style="left:2028.3px;top:1804.9px;font-size:22px;line-height:22px;font-weight:400;color:#9a9a9a;letter-spacing:0.07px;">Page 2 out of 5</div>
<div class=t style="left:2285.0px;top:1805.3px;font-size:23.32px;line-height:23.32px;font-weight:400;color:#1e1e1e;letter-spacing:0.00px;-webkit-text-stroke:0.8px #1e1e1e;">2</div>
<div class=t style="left:45.4px;top:233.1px;font-size:21.16px;line-height:21.16px;font-weight:400;color:#9b9b9b;letter-spacing:-0.17px;-webkit-text-stroke:0.4px #9b9b9b;">AUDIENCE</div>
<div class=t style="left:45.4px;top:844.1px;font-size:21.16px;line-height:21.16px;font-weight:400;color:#9b9b9b;letter-spacing:0.31px;-webkit-text-stroke:0.4px #9b9b9b;">ACQUISITION</div>
<div class=t style="left:44.4px;top:1310.1px;font-size:21.16px;line-height:21.16px;font-weight:400;color:#9b9b9b;letter-spacing:0.22px;-webkit-text-stroke:0.4px #9b9b9b;">BEHAVIOR</div>
<div class=t style="left:102.7px;top:306.4px;font-size:24.32px;line-height:24.32px;font-weight:400;color:#1e1e1e;letter-spacing:1.22px;-webkit-text-stroke:0.8px #1e1e1e;">Audience overview</div>
<div class=t style="left:101.7px;top:377.4px;font-size:24.32px;line-height:24.32px;font-weight:400;color:#1e1e1e;letter-spacing:1.24px;-webkit-text-stroke:0.8px #1e1e1e;">Session log</div>
<div class=t style="left:100.7px;top:448.6px;font-size:24.32px;line-height:24.32px;font-weight:400;color:#1e1e1e;letter-spacing:1.43px;-webkit-text-stroke:0.8px #1e1e1e;">Devices &amp; software</div>
<div class=t style="left:100.7px;top:519.8px;font-size:24.32px;line-height:24.32px;font-weight:400;color:#1e1e1e;letter-spacing:1.57px;-webkit-text-stroke:0.8px #1e1e1e;">Locations</div>
<div class=t style="left:100.7px;top:591.0px;font-size:24.32px;line-height:24.32px;font-weight:400;color:#ffffff;letter-spacing:1.38px;-webkit-text-stroke:0.8px #ffffff;">Engagement</div>
<div class=t style="left:101.7px;top:662.2px;font-size:24.32px;line-height:24.32px;font-weight:400;color:#1e1e1e;letter-spacing:1.44px;-webkit-text-stroke:0.8px #1e1e1e;">Custom dimensions</div>
<div class=t style="left:101.7px;top:733.4px;font-size:24.32px;line-height:24.32px;font-weight:400;color:#1e1e1e;letter-spacing:1.35px;-webkit-text-stroke:0.8px #1e1e1e;">Custom variables</div>
<div class=t style="left:101.7px;top:914.4px;font-size:24.32px;line-height:24.32px;font-weight:400;color:#1e1e1e;letter-spacing:1.26px;-webkit-text-stroke:0.8px #1e1e1e;">Channels</div>
<div class=t style="left:101.7px;top:985.4px;font-size:24.32px;line-height:24.32px;font-weight:400;color:#1e1e1e;letter-spacing:1.16px;-webkit-text-stroke:0.8px #1e1e1e;">Search engines</div>
<div class=t style="left:102.7px;top:1056.7px;font-size:24.32px;line-height:24.32px;font-weight:400;color:#1e1e1e;letter-spacing:1.22px;-webkit-text-stroke:0.8px #1e1e1e;">Websites &amp; social</div>
<div class=t style="left:101.7px;top:1127.9px;font-size:24.32px;line-height:24.32px;font-weight:400;color:#1e1e1e;letter-spacing:1.35px;-webkit-text-stroke:0.8px #1e1e1e;">Campaigns</div>
<div class=t style="left:101.7px;top:1199.0px;font-size:24.32px;line-height:24.32px;font-weight:400;color:#1e1e1e;letter-spacing:1.06px;-webkit-text-stroke:0.8px #1e1e1e;">Google Search Console</div>
<div class=t style="left:102.1px;top:1380.4px;font-size:24.32px;line-height:24.32px;font-weight:400;color:#1e1e1e;letter-spacing:1.15px;-webkit-text-stroke:0.8px #1e1e1e;">Pages</div>
<div class=t style="left:102.1px;top:1451.8px;font-size:24.32px;line-height:24.32px;font-weight:400;color:#1e1e1e;letter-spacing:1.53px;-webkit-text-stroke:0.8px #1e1e1e;">Internal search</div>
<div class=t style="left:103.1px;top:1523.2px;font-size:24.32px;line-height:24.32px;font-weight:400;color:#1e1e1e;letter-spacing:1.58px;-webkit-text-stroke:0.8px #1e1e1e;">Outlinks</div>
<div class=t style="left:102.1px;top:1594.6px;font-size:24.32px;line-height:24.32px;font-weight:400;color:#1e1e1e;letter-spacing:1.65px;-webkit-text-stroke:0.8px #1e1e1e;">Downloads</div>
<div class=t style="left:103.1px;top:1666.0px;font-size:24.32px;line-height:24.32px;font-weight:400;color:#1e1e1e;letter-spacing:1.42px;-webkit-text-stroke:0.8px #1e1e1e;">Custom events</div>
<div class=t style="left:103.1px;top:1737.4px;font-size:24.32px;line-height:24.32px;font-weight:400;color:#1e1e1e;letter-spacing:1.65px;-webkit-text-stroke:0.8px #1e1e1e;">Content performance</div>
</div></div></div></body></html>
